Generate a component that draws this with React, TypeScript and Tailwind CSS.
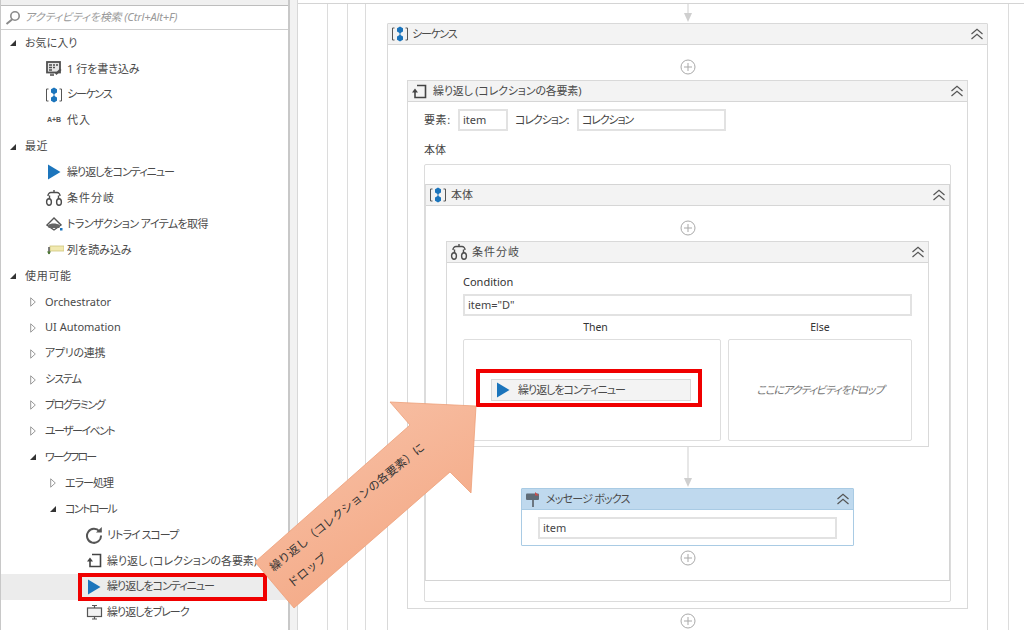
import React from "react";

const JP = { fontFamily: '"Noto Sans", "Noto Sans CJK JP", sans-serif' };

const Seq = () => (
  <svg width="18" height="18" viewBox="0 0 18 18" className="shrink-0">
    <path d="M3.5 3H1.5V15H3.5M14.5 3H16.5V15H14.5" fill="none" stroke="#555" strokeWidth="1" />
    <path d="M9 1.5L12 3.3V6.5L9 8.3L6 6.5V3.3Z M9 9.7L12 11.5V14.7L9 16.5L6 14.7V11.5Z" fill="#1c75bc" />
    <path d="M9 7V11" stroke="#1c75bc" strokeWidth="1" />
  </svg>
);
const Play = ({ s = 16 }: { s?: number }) => (
  <svg width={s} height={s} viewBox="0 0 16 16" className="shrink-0">
    <path d="M2 0.5L14.5 8L2 15.5Z" fill="#1c75bc" />
  </svg>
);
const Branch = () => (
  <svg width="18" height="18" viewBox="0 0 18 18" className="shrink-0" fill="none" stroke="#4d4d4d" strokeWidth="1.4">
    <path d="M6 3.5H12M9 1V3.5M4.5 6.5V10M13.5 6.5V10" />
    <path d="M3 7C3 5 4.5 3.5 6 3.5M15 7C15 5 13.5 3.5 12 3.5" />
    <ellipse cx="4" cy="13" rx="2.4" ry="3.2" />
    <ellipse cx="14" cy="13" rx="2.4" ry="3.2" />
  </svg>
);
const Loop = () => (
  <svg width="17" height="17" viewBox="0 0 17 17" className="shrink-0" fill="none" stroke="#444" strokeWidth="1.6">
    <path d="M6 2.5H14.5V14.5H4V9" />
    <path d="M1 9.5H7L4 5.5Z" fill="#444" stroke="none" />
  </svg>
);
const Write = () => (
  <svg width="16" height="16" viewBox="0 0 16 16" className="shrink-0">
    <rect x="1" y="1" width="13" height="10.5" fill="#e6e6e6" stroke="#505050" strokeWidth="1.8" />
    <path d="M3 4H6M7 4H9M10 4H12M3 6.5H6M7 6.5H9M3 9H6" stroke="#505050" strokeWidth="1.3" />
    <path d="M9 12.5L14 7.5L15.5 9L10.5 14Z" fill="#505050" />
    <path d="M4 12.5H8V15H4Z" fill="#777" />
  </svg>
);
const Tx = () => (
  <svg width="18" height="16" viewBox="0 0 18 16" className="shrink-0">
    <path d="M1 9L8 2L15 9L8 14Z" fill="#fff" stroke="#555" strokeWidth="1.4" />
    <path d="M2.5 9C4 7 11 7 13.5 9V12H2.5Z" fill="#666" />
    <rect x="14" y="12" width="2.5" height="2.5" fill="#1c75bc" />
  </svg>
);
const ReadCol = () => (
  <svg width="17" height="10" viewBox="0 0 17 10" className="shrink-0">
    <rect x="3" y="1" width="14" height="5" fill="#f1e9b0" stroke="#cfc57e" strokeWidth="0.8" />
    <path d="M2 2V9" stroke="#555" strokeWidth="1.5" />
    <path d="M0 6.5L2 9.5L4 6.5Z" fill="#4a7a2e" />
  </svg>
);
const Retry = () => (
  <svg width="18" height="18" viewBox="0 0 18 18" className="shrink-0" fill="none" stroke="#555" strokeWidth="2">
    <path d="M14.5 5.5A7 7 0 1 0 16 9.5" />
    <path d="M11 6.5H16.8V1Z" fill="#555" stroke="none" />
  </svg>
);
const Brk = () => (
  <svg width="17" height="17" viewBox="0 0 17 17" className="shrink-0" fill="none" stroke="#555" strokeWidth="1.2">
    <rect x="1.5" y="4" width="14" height="8.5" fill="#f2f2f2" />
    <path d="M6 1.5H11M6 15H11M8.5 1.5V4M8.5 12.5V15" />
  </svg>
);
const MsgIcon = () => (
  <svg width="18" height="18" viewBox="0 0 18 18" className="shrink-0">
    <rect x="1" y="3.5" width="13" height="6.5" rx="1" fill="#5f6b76" />
    <path d="M10 2L14 5.5H10Z" fill="#c94c4c" />
    <rect x="7" y="10" width="2" height="7" fill="#6d7780" />
  </svg>
);
const Collapse = () => (
  <svg width="14" height="12" viewBox="0 0 14 12" className="shrink-0" fill="none" stroke="#555" strokeWidth="1.2">
    <path d="M1.5 6L7 1.2L12.5 6M1.5 11L7 6.2L12.5 11" />
  </svg>
);
const Plus = () => (
  <svg width="16" height="16" viewBox="0 0 16 16" className="shrink-0" fill="none" stroke="#a9a9a9" strokeWidth="1">
    <circle cx="8" cy="8" r="7" fill="#fff" />
    <path d="M8 4V12M4 8H12" />
  </svg>
);
const Search = () => (
  <svg width="16" height="16" viewBox="0 0 16 16" className="shrink-0" fill="none" stroke="#8a8a8a" strokeWidth="1.6">
    <circle cx="10" cy="6" r="4.2" />
    <path d="M7 9.5L1.5 14" strokeWidth="2" />
  </svg>
);
const Open = () => (
  <svg width="8" height="8" viewBox="0 0 8 8"><path d="M7 1V7H1Z" fill="#333" /></svg>
);
const Closed = () => (
  <svg width="6" height="10" viewBox="0 0 6 10"><path d="M0.7 0.8L5.3 5L0.7 9.2Z" fill="#fff" stroke="#999" /></svg>
);
const AB = () => (
  <span className="w-[16px] shrink-0 text-center text-[7px] font-bold text-[#555]" style={{ fontFamily: '"Liberation Sans", sans-serif' }}>A+B</span>
);

type Row = { t: string; x: number; icon: React.ReactNode; tx: number; sel?: boolean; ls?: number };

const rows: Row[] = [
  { t: "お気に入り", x: 9, icon: <Open />, tx: 25 },
  { t: "1 行を書き込み", x: 46, icon: <Write />, tx: 67 },
  { t: "シーケンス", x: 45, icon: <Seq />, tx: 67, ls: -1.2 },
  { t: "代入", x: 46, icon: <AB />, tx: 67, ls: 1 },
  { t: "最近", x: 9, icon: <Open />, tx: 25, ls: 0.5 },
  { t: "繰り返しをコンティニュー", x: 46, icon: <Play />, tx: 67, ls: -1 },
  { t: "条件分岐", x: 45, icon: <Branch />, tx: 67, ls: 1 },
  { t: "トランザクション アイテムを取得", x: 46, icon: <Tx />, tx: 67, ls: -0.6 },
  { t: "列を読み込み", x: 47, icon: <ReadCol />, tx: 67 },
  { t: "使用可能", x: 9, icon: <Open />, tx: 25, ls: 0.7 },
  { t: "Orchestrator", x: 30, icon: <Closed />, tx: 45 },
  { t: "UI Automation", x: 30, icon: <Closed />, tx: 45 },
  { t: "アプリの連携", x: 30, icon: <Closed />, tx: 45, ls: -0.3 },
  { t: "システム", x: 30, icon: <Closed />, tx: 45, ls: -1 },
  { t: "プログラミング", x: 30, icon: <Closed />, tx: 45, ls: -1.4 },
  { t: "ユーザーイベント", x: 30, icon: <Closed />, tx: 45, ls: -1.6 },
  { t: "ワークフロー", x: 29, icon: <Open />, tx: 45, ls: -1.8 },
  { t: "エラー処理", x: 50, icon: <Closed />, tx: 65, ls: -1 },
  { t: "コントロール", x: 49, icon: <Open />, tx: 65, ls: -1.6 },
  { t: "リトライ スコープ", x: 85, icon: <Retry />, tx: 107, ls: -1 },
  { t: "繰り返し (コレクションの各要素)", x: 86, icon: <Loop />, tx: 107, ls: -0.1 },
  { t: "繰り返しをコンティニュー", x: 86, icon: <Play />, tx: 107, sel: true, ls: -1 },
  { t: "繰り返しをブレーク", x: 86, icon: <Brk />, tx: 107, ls: -1 },
];

const label = 'whitespace-nowrap text-[11px] text-[#4a4a4a] [font-feature-settings:"palt"]';

const TreeRow = ({ r }: { r: Row }) => (
  <div className={`flex h-[25.9px] items-center ${r.sel ? "bg-[#ececec]" : ""}`} style={{ paddingLeft: r.x - 1 }}>
    <div className="flex items-center" style={{ width: r.tx - r.x }}>{r.icon}</div>
    <span className={label} style={{ letterSpacing: r.ls ?? 0 }}>{r.t}</span>
  </div>
);

const Header = ({ icon, title, blue, gap = 5, ls = 0 }: { icon: React.ReactNode; title: string; blue?: boolean; gap?: number; ls?: number }) => (
  <div className={`flex h-[21px] shrink-0 items-center border-b pl-[3px] pr-[3px] ${blue ? "border-[#a9cbe4] bg-[#bfd9ee]" : "border-[#d6d6d6] bg-[#f3f3f3]"}`}>
    {icon}
    <span className={label} style={{ marginLeft: gap, letterSpacing: ls }}>{title}</span>
    <span className="ml-auto flex"><Collapse /></span>
  </div>
);

const Field = ({ children, className = "" }: { children?: React.ReactNode; className?: string }) => (
  <div className={`flex h-[22px] items-center border-2 border-[#e2e2e2] bg-white px-[3px] text-[11px] text-[#444] [font-feature-settings:"palt"] ${className}`}>{children}</div>
);

function Arrow({ h }: { h: number }) {
  return (
    <svg width="10" height={h} viewBox={`0 0 10 ${h}`} className="shrink-0">
      <path d={`M5 0V${h - 8}`} stroke="#cfcfcf" strokeWidth="1" />
      <path d={`M1 ${h - 10}H9L5 ${h - 1}Z`} fill="#cfcfcf" />
    </svg>
  );
}

export default function App() {
  return (
    <div className="relative flex h-[630px] w-[1024px] overflow-hidden bg-white" style={JP}>
      {/* Activities panel */}
      <div className="flex h-full w-[290px] shrink-0 flex-col border-r-2 border-l border-[#c8c8c8]">
        <div className="h-[6px] shrink-0 border-b border-[#bdbdbd] bg-[#f0f0f0]" />
        <div className="flex h-[24px] shrink-0 items-center gap-[4px] border-b border-[#cfcfcf] pl-[4px]">
          <Search />
          <span className='whitespace-nowrap text-[11px] italic tracking-[-0.1px] text-[#9a9a9a] [font-feature-settings:"palt"]'>アクティビティを検索 (Ctrl+Alt+F)</span>
        </div>
        {rows.map((r, i) => <TreeRow key={i} r={r} />)}
      </div>
      <div className="h-full w-[7px] shrink-0 bg-[#f2f2f2]" />
      {/* Canvas */}
      <div className="flex h-full min-h-0 min-w-0 flex-1 flex-col overflow-hidden border-l border-[#d8d8d8]">
        <div className="h-[4px] shrink-0 border-b border-[#d4d4d4]" />
        <div className="flex flex-1 pl-[29px]">
          <div className="flex flex-1 border-l border-[#dcdcdc] pl-[19px]">
            <div className="flex flex-1 border-l border-[#dcdcdc] pl-[17px]">
              <div className="flex w-[644px] border-x border-[#dcdcdc] pl-[21px]">
                <div className="w-[601px]">
                  <div className="flex h-[19px] justify-center">
                    <Arrow h={19} />
                  </div>
                  <div className="flex flex-col rounded-[1px] border border-[#d9d9d9] pb-[30px]">
                    <Header icon={<Seq />} title="シーケンス" gap={3} ls={-1.2} />
                    <div className="flex justify-center pt-[14px] pb-[5px]"><Plus /></div>
                    <div className="mx-[19px] flex flex-col border border-[#d9d9d9]">
                      <Header icon={<Loop />} title="繰り返し (コレクションの各要素)" ls={-0.2} />
                      <div className='flex h-[29px] items-end pl-[16px] text-[11px] text-[#444] [font-feature-settings:"palt"]'>
                        <span className="w-[34px] leading-[22px] tracking-[0.6px]">要素:</span>
                        <Field className="w-[50px]">item</Field>
                        <span className="ml-[7px] w-[62px] whitespace-nowrap leading-[22px] tracking-[-1.1px]">コレクション:</span>
                        <Field className="w-[149px] tracking-[-1.2px]">コレクション</Field>
                      </div>
                      <div className="pl-[16px] pt-[10px] pb-[6px] text-[11px] leading-[17px] text-[#444]">本体</div>
                      <div className="mx-[16px] mb-[6px] flex flex-col rounded-[2px] border border-[#dcdcdc] pt-[19px] pb-[20px]">
                        <div className="flex flex-col border-y border-r border-[#d4d4d4] border-l border-l-[#dcdcdc]">
                          <Header icon={<Seq />} title="本体" gap={4} />
                          <div className="flex justify-center pt-[14px] pb-[5px]"><Plus /></div>
                          <div className="mx-[20px] flex flex-col border border-[#d9d9d9]">
                            <Header icon={<Branch />} title="条件分岐" gap={4} ls={1} />
                            <div className="flex flex-col px-[16px] pb-[5px]">
                              <div className="pt-[11px] pb-[4px] text-[11px] leading-[16px] text-[#333]">Condition</div>
                              <Field>item="D"</Field>
                              <div className="flex h-[23px] items-center text-[10.5px] text-[#333]">
                                <span className="w-[265px] text-center">Then</span>
                                <span className="flex-1 text-center">Else</span>
                              </div>
                              <div className="flex gap-[7px]">
                                <div className="flex h-[102px] w-[258px] items-center rounded-[2px] border border-[#dedede] px-[27px]">
                                  <div className="flex h-[22px] w-[200px] items-center border border-[#d9d9d9] bg-[#f3f3f3] pl-[3px]">
                                    <Play />
                                    <span className={label} style={{ marginLeft: 7, letterSpacing: -1 }}>繰り返しをコンティニュー</span>
                                  </div>
                                </div>
                                <div className='flex h-[102px] flex-1 items-center justify-center rounded-[2px] border border-[#dedede] text-[11px] italic tracking-[-1.1px] text-[#777] [font-feature-settings:"palt"]'>
                                  ここにアクティビティをドロップ
                                </div>
                              </div>
                            </div>
                          </div>
                          <div className="flex h-[41px] justify-center"><Arrow h={41} /></div>
                          <div className="mx-[95px] flex flex-col rounded-[1px] border border-[#a9cbe4]">
                            <Header icon={<MsgIcon />} title="メッセージ ボックス" blue gap={3} ls={-0.8} />
                            <div className="px-[16px] pt-[7px] pb-[6px]"><Field>item</Field></div>
                          </div>
                          <div className="flex justify-center pt-[4px] pb-[14px]"><Plus /></div>
                        </div>
                      </div>
                    </div>
                    <div className="flex justify-center pt-[4px]"><Plus /></div>
                  </div>
                </div>
              </div>
            </div>
          </div>
        </div>
      </div>

      {/* Red highlight boxes */}
      <div className="absolute left-[78px] top-[573px] h-[28px] w-[189px] border-[4px] border-[#f00000]" />
      <div className="absolute left-[476px] top-[369px] h-[38px] w-[226px] border-[4px] border-[#f00000]" />

      {/* Callout arrow */}
      <svg className="absolute left-0 top-0" width="1024" height="630" viewBox="0 0 1024 630">
        <defs>
          <linearGradient id="ar" x1="0.2" y1="0" x2="0.8" y2="1">
            <stop offset="0" stopColor="#f8c2a8" />
            <stop offset="1" stopColor="#f3a580" />
          </linearGradient>
        </defs>
        <path d="M476 406L471 493L450 472L294 608L255 562L410 425L390 402Z" fill="url(#ar)" stroke="#ee9f78" strokeWidth="0.8" />
      </svg>
      <div className="absolute left-[273px] top-[571px] origin-top-left -rotate-[39deg] whitespace-nowrap text-[11.5px] leading-[14px] text-[#333]">
        <div className="-translate-y-[10px]">繰り返し（コレクションの各要素）に</div>
        <div className="mt-[10px] -translate-y-[10px] pl-[4px]">ドロップ</div>
      </div>
    </div>
  );
}
